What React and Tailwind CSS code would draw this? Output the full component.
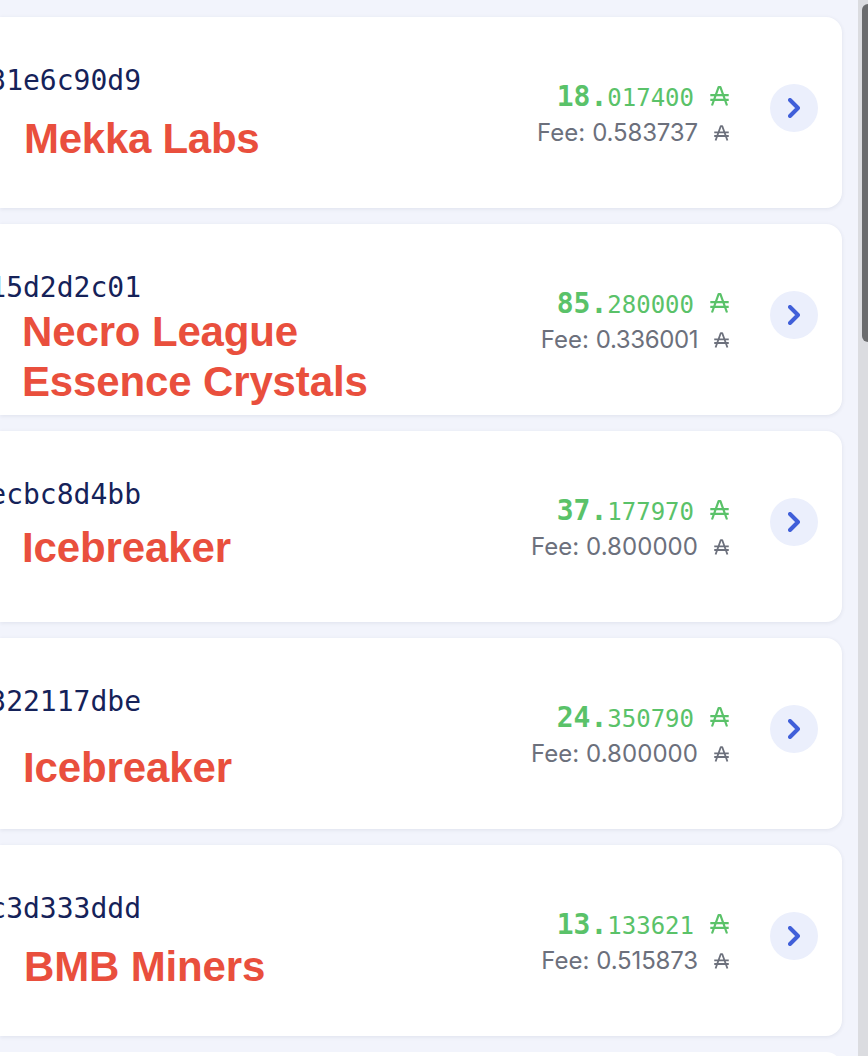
import React from "react";

const rows = [
  { hash: "31e6c90d9", name: ["Mekka Labs"], namePos: "pt-[17px] pl-[24px] tracking-[-0.27px]", whole: "18.", part: "017400", fee: "0.583737", feeFit: "tracking-[-0.14px]" },
  { hash: "15d2d2c01", name: ["Necro League", "Essence Crystals"], namePos: "pt-[3px] pl-[22px] tracking-[-0.14px]", whole: "85.", part: "280000", fee: "0.336001", feeFit: "tracking-[-0.4px]" },
  { hash: "ecbc8d4bb", name: ["Icebreaker"], namePos: "pt-[12px] pl-[22px] tracking-[-0.12px]", whole: "37.", part: "177970", fee: "0.800000", feeFit: "tracking-[0.06px]" },
  { hash: "322117dbe", name: ["Icebreaker"], namePos: "pt-[25px] pl-[23px] tracking-[-0.12px]", whole: "24.", part: "350790", fee: "0.800000", feeFit: "tracking-[0.06px]" },
  { hash: "c3d333ddd", name: ["BMB Miners"], namePos: "pt-[17px] pl-[24px] tracking-[-0.15px]", whole: "13.", part: "133621", fee: "0.515873", feeFit: "tracking-[-0.15px]" },
];

function Ada({ className, stroke }) {
  return (
    <svg viewBox="0 0 19 20" className={className} fill="none" stroke="currentColor" strokeWidth={stroke} aria-hidden="true">
      <path d="M2 19.5 8.6 1.2H10.4L17 19.5M0.3 9.2H18.7M0.3 13.8H18.7" strokeLinejoin="round" />
    </svg>
  );
}

function Row({ row }) {
  return (
    <article className="flex h-[191px] w-[842px] shrink-0 rounded-r-2xl bg-white shadow-[0_1px_4px_rgba(30,41,80,0.09)]">
      <div className="flex min-w-0 flex-1 flex-col pt-[47px]">
        <div className="flex h-[33px] w-[141px] justify-end whitespace-nowrap font-['DejaVu_Sans_Mono',monospace] text-[28px] leading-[33px] text-[#152259]">
          {row.hash}
        </div>
        <div className={"whitespace-nowrap font-['Liberation_Sans',sans-serif] text-[42px] font-bold leading-[50px] text-[#e94f3d] " + row.namePos}>
          {row.name.map((line) => (
            <div key={line}>{line}</div>
          ))}
        </div>
      </div>
      <div className="flex w-[210px] flex-col items-end pt-[62px]">
        <div className="flex h-[36px] items-baseline whitespace-nowrap font-['DejaVu_Sans_Mono',monospace] leading-[36px] text-[#5ac269]">
          <span className="text-[28px] font-bold">{row.whole}</span>
          <span className="text-[24px]">{row.part}</span>
          <Ada className="ml-4 h-5 w-[19px]" stroke={2.2} />
        </div>
        <div className="flex h-[36px] items-baseline whitespace-nowrap font-[Inter,sans-serif] text-[24px] leading-[36px] text-[#6c707c]">
          <span>Fee:</span>
          <span className={"ml-[7px] " + row.feeFit}>{row.fee}</span>
          <Ada className="ml-4 h-4 w-[15px]" stroke={2.3} />
        </div>
      </div>
      <button aria-label="Details" className="mt-[67px] mr-6 ml-[41px] flex size-12 items-center justify-center rounded-full bg-[#ebeffc] text-[#405fd9]">
        <svg viewBox="0 0 12 20" className="h-5 w-3" fill="none" stroke="currentColor" strokeWidth="4" strokeLinecap="round" strokeLinejoin="round">
          <path d="M2 2 10 10 2 18" />
        </svg>
      </button>
    </article>
  );
}

export default function App() {
  return (
    <main className="flex h-[1056px] w-[868px] overflow-hidden bg-[#f2f4fc]">
      <div className="flex w-[858px] flex-col gap-4 pt-[17px]">
        {rows.map((row) => (
          <Row key={row.hash} row={row} />
        ))}
        <div className="h-[191px] w-[842px] shrink-0 rounded-r-2xl bg-white" />
      </div>
      <div className="flex w-[10px] justify-end bg-[#dbdce0] pt-[4px]">
        <div className="h-[338px] w-[6px] rounded-l-[6px] bg-[#6b6c6e]" />
      </div>
    </main>
  );
}
